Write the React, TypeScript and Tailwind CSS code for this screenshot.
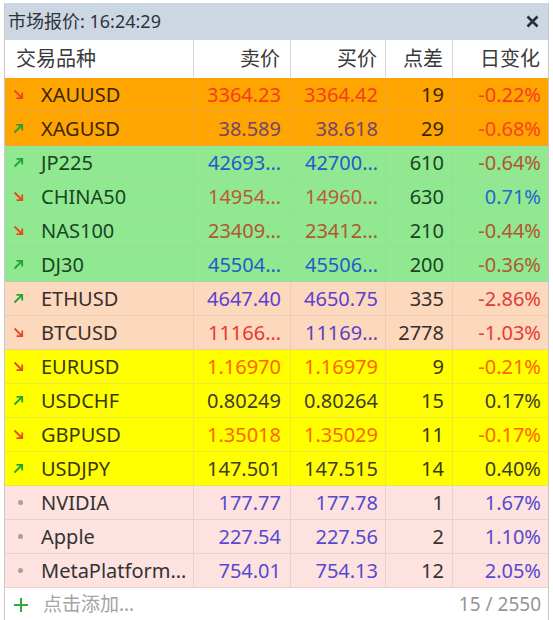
import React from "react";

type Row = {
  name: string;
  dir: "up" | "down" | "dot";
  bid: string;
  ask: string;
  spread: string;
  change: string;
  bg: string;
  line: string;
  ink: string;
  bidColor: string;
  askColor: string;
  chgColor: string;
};

const orange = { bg: "bg-[#ffa500]", line: "border-[#f0a43a]", ink: "text-[#3a2608]" };
const green = { bg: "bg-[#90e890]", line: "border-[#9cd99c]", ink: "text-[#1a4424]" };
const peach = { bg: "bg-[#fcd8bd]", line: "border-[#ecccb8]", ink: "text-[#382e2e]" };
const yellow = { bg: "bg-[#ffff00]", line: "border-[#eaea3a]", ink: "text-[#383810]" };
const pink = { bg: "bg-[#fde2df]", line: "border-[#e8d2d0]", ink: "text-[#333333]" };

const rows: Row[] = [
  { name: "XAUUSD", dir: "down", bid: "3364.23", ask: "3364.42", spread: "19", change: "-0.22%", ...orange, bidColor: "text-[#f53d1c]", askColor: "text-[#f53d1c]", chgColor: "text-[#f53d1c]" },
  { name: "XAGUSD", dir: "up", bid: "38.589", ask: "38.618", spread: "29", change: "-0.68%", ...orange, bidColor: "text-[#74466a]", askColor: "text-[#74466a]", chgColor: "text-[#f5451c]" },
  { name: "JP225", dir: "up", bid: "42693…", ask: "42700…", spread: "610", change: "-0.64%", ...green, bidColor: "text-[#245ccc]", askColor: "text-[#245ccc]", chgColor: "text-[#b25630]" },
  { name: "CHINA50", dir: "down", bid: "14954…", ask: "14960…", spread: "630", change: "0.71%", ...green, bidColor: "text-[#bc5c36]", askColor: "text-[#bc5c36]", chgColor: "text-[#2468cc]" },
  { name: "NAS100", dir: "down", bid: "23409…", ask: "23412…", spread: "210", change: "-0.44%", ...green, bidColor: "text-[#b45630]", askColor: "text-[#b45630]", chgColor: "text-[#b45630]" },
  { name: "DJ30", dir: "up", bid: "45504…", ask: "45506…", spread: "200", change: "-0.36%", ...green, bidColor: "text-[#245ccc]", askColor: "text-[#245ccc]", chgColor: "text-[#b45630]" },
  { name: "ETHUSD", dir: "up", bid: "4647.40", ask: "4650.75", spread: "335", change: "-2.86%", ...peach, bidColor: "text-[#5e40d0]", askColor: "text-[#5e40d0]", chgColor: "text-[#e03c38]" },
  { name: "BTCUSD", dir: "down", bid: "11166…", ask: "11169…", spread: "2778", change: "-1.03%", ...peach, bidColor: "text-[#ec3632]", askColor: "text-[#5e40c6]", chgColor: "text-[#e63c38]" },
  { name: "EURUSD", dir: "down", bid: "1.16970", ask: "1.16979", spread: "9", change: "-0.21%", ...yellow, bidColor: "text-[#ff6600]", askColor: "text-[#ff6600]", chgColor: "text-[#ff6600]" },
  { name: "USDCHF", dir: "up", bid: "0.80249", ask: "0.80264", spread: "15", change: "0.17%", ...yellow, bidColor: "text-[#3c3c2c]", askColor: "text-[#3c3c2c]", chgColor: "text-[#3c3c2c]" },
  { name: "GBPUSD", dir: "down", bid: "1.35018", ask: "1.35029", spread: "11", change: "-0.17%", ...yellow, bidColor: "text-[#ff6600]", askColor: "text-[#ff6600]", chgColor: "text-[#ff6600]" },
  { name: "USDJPY", dir: "up", bid: "147.501", ask: "147.515", spread: "14", change: "0.40%", ...yellow, bidColor: "text-[#3c3c2c]", askColor: "text-[#3c3c2c]", chgColor: "text-[#3c3c2c]" },
  { name: "NVIDIA", dir: "dot", bid: "177.77", ask: "177.78", spread: "1", change: "1.67%", ...pink, bidColor: "text-[#564ad0]", askColor: "text-[#564ad0]", chgColor: "text-[#564ad0]" },
  { name: "Apple", dir: "dot", bid: "227.54", ask: "227.56", spread: "2", change: "1.10%", ...pink, bidColor: "text-[#564ad0]", askColor: "text-[#564ad0]", chgColor: "text-[#564ad0]" },
  { name: "MetaPlatform…", dir: "dot", bid: "754.01", ask: "754.13", spread: "12", change: "2.05%", ...pink, bidColor: "text-[#564ad0]", askColor: "text-[#564ad0]", chgColor: "text-[#564ad0]" },
];

function Marker({ dir }: { dir: Row["dir"] }) {
  if (dir === "dot") {
    return <span className="w-[5px] h-[5px] rounded-full bg-[#a8a0a0] ml-[3px]" />;
  }
  if (dir === "down") {
    return (
      <svg width="11" height="11" viewBox="0 0 11 11" fill="none" stroke="#ea4622" strokeWidth="1.8">
        <path d="M1.5 1.5 L9 9" />
        <path d="M9.2 3.5 V9.2 H3.5" />
      </svg>
    );
  }
  return (
    <svg width="11" height="11" viewBox="0 0 11 11" fill="none" stroke="#20a436" strokeWidth="1.8">
      <path d="M1.5 9.5 L9 2" />
      <path d="M3.5 1.8 H9.2 V7.5" />
    </svg>
  );
}

export default function App() {
  const cols = "grid grid-cols-[189px_97px_95px_67px_95px]";

  return (
    <div
      className="w-[553px] h-[620px] bg-white pt-[3px] px-[4px] overflow-hidden"
      style={{ fontFamily: '"Noto Sans", "Noto Sans CJK SC", sans-serif' }}
    >
      <div className="w-[545px] border-x border-[#c9c9c9] flex flex-col">

        {/* Title bar */}
        <div className="h-[37px] bg-[#cdd7e4] flex items-center justify-between pl-[3px] pr-[9px]">
          <span className="text-[18px] text-[#2f3338]">市场报价: 16:24:29</span>
          <svg width="13" height="13" viewBox="0 0 13 13" stroke="#2a2e33" strokeWidth="2.6">
            <path d="M1.5 1.5 L11.5 11.5 M11.5 1.5 L1.5 11.5" />
          </svg>
        </div>

        {/* Header */}
        <div className={`${cols} h-[38px] bg-white text-[20px] text-[#3a3a3a]`}>
          <div className="border-r border-[#d6d6d6] flex items-center pl-[11px]">交易品种</div>
          <div className="border-r border-[#d6d6d6] flex items-center justify-end pr-[10px]">卖价</div>
          <div className="border-r border-[#d6d6d6] flex items-center justify-end pr-[8px]">买价</div>
          <div className="border-r border-[#d6d6d6] flex items-center justify-end pr-[9px]">点差</div>
          <div className="flex items-center justify-end pr-[8px]">日变化</div>
        </div>

        {/* Rows */}
        {rows.map((r) => (
          <div key={r.name} className={`${cols} h-[34px] ${r.bg} border-b ${r.line} text-[20px] leading-none`}>
            <div className={`border-r ${r.line} flex items-center pl-[8px] gap-[17px] ${r.ink} whitespace-nowrap`}>
              <span className="w-[11px] flex items-center justify-center">
                <Marker dir={r.dir} />
              </span>
              <span>{r.name}</span>
            </div>
            <div className={`border-r ${r.line} flex items-center justify-end pr-[9px] ${r.bidColor}`}>{r.bid}</div>
            <div className={`border-r ${r.line} flex items-center justify-end pr-[7px] ${r.askColor}`}>{r.ask}</div>
            <div className={`border-r ${r.line} flex items-center justify-end pr-[8px] ${r.ink}`}>{r.spread}</div>
            <div className={`flex items-center justify-end pr-[7px] ${r.chgColor}`}>{r.change}</div>
          </div>
        ))}

        {/* Footer */}
        <div className="h-[33px] bg-white flex items-center justify-between pl-[8px] pr-[7px]">
          <div className="flex items-center gap-[14px]">
            <svg width="16" height="16" viewBox="0 0 16 16" stroke="#2eaa3e" strokeWidth="2">
              <path d="M8 1 V15 M1 8 H15" />
            </svg>
            <span className="text-[19px] text-[#a3a3a3]">点击添加…</span>
          </div>
          <span className="text-[19px] text-[#959595]">15 / 2550</span>
        </div>
      </div>
    </div>
  );
}
